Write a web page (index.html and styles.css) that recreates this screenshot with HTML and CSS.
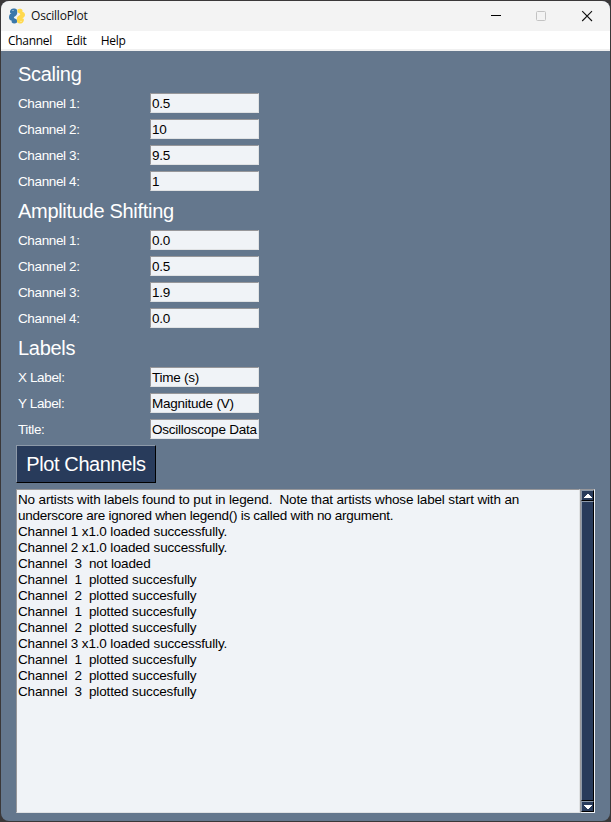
FILE: index.html
```html
<!DOCTYPE html>
<html lang="en">
<head>
<meta charset="utf-8">
<title>OscilloPlot</title>
<link rel="stylesheet" href="styles.css">
</head>
<body>
<div class="window">
  <header class="titlebar">
    <svg class="logo" width="16" height="16" viewBox="0 0 16 16">
      <path fill="#3b78aa" d="M2 1.500C3 .3 6.500 .2 7.600 1.200C8.500 2.500 8.500 5 7.800 6.500C7 8 5.300 8.300 4.800 9.800C5.300 10.800 7 10.500 8 12V14.500C6.500 15.700 4 15.700 2.800 14.500L2.500 12.500C.8 12.500 0 11 0 9.300C0 7.500 .8 6 2.500 5H1.300C.7 4 1 2.500 2 1.500Z"/>
      <path fill="#ffd94d" d="M8.500 1.500C9.700.5 12.500 .5 13.500 2V4C15.300 4 16 5.500 16 7C16 8.500 14.600 9.800 13.300 10.500L14.700 10.800C15.200 12.500 14.700 14 13.300 15C11.500 15.800 9.500 15.700 8.300 14.500C7.700 13 7.700 10.500 8.300 9C9.200 7.600 10.900 7.300 11.300 6.200C11 5 9.500 5.500 8.500 4Z"/>
      <circle cx="4" cy="2.500" r=".5" fill="#fff"/>
      <circle cx="12" cy="13.300" r=".5" fill="#fff"/>
    </svg>
    <span class="app-name">OscilloPlot</span>
    <svg class="controls" width="106" height="12" viewBox="0 0 106 12" fill="none">
      <path d="M0 5.500H10" stroke="#000"/>
      <rect x="45.500" y="1.500" width="9" height="9" rx="1" stroke="#c3c3c3"/>
      <path d="M91.200 1.200L101 11M101 1.200L91.200 11" stroke="#111" stroke-width="1.100"/>
    </svg>
  </header>
  <nav class="menubar"><span>Channel</span><span>Edit</span><span>Help</span></nav>
  <main class="content">
    <section>
      <h2>Scaling</h2>
      <div class="row"><span class="label">Channel 1:</span><div class="field">0.5</div></div>
      <div class="row"><span class="label">Channel 2:</span><div class="field">10</div></div>
      <div class="row"><span class="label">Channel 3:</span><div class="field">9.5</div></div>
      <div class="row"><span class="label">Channel 4:</span><div class="field">1</div></div>
    </section>
    <section>
      <h2>Amplitude Shifting</h2>
      <div class="row"><span class="label">Channel 1:</span><div class="field">0.0</div></div>
      <div class="row"><span class="label">Channel 2:</span><div class="field">0.5</div></div>
      <div class="row"><span class="label">Channel 3:</span><div class="field">1.9</div></div>
      <div class="row"><span class="label">Channel 4:</span><div class="field">0.0</div></div>
    </section>
    <section>
      <h2>Labels</h2>
      <div class="row"><span class="label">X Label:</span><div class="field">Time (s)</div></div>
      <div class="row"><span class="label">Y Label:</span><div class="field">Magnitude (V)</div></div>
      <div class="row"><span class="label">Title:</span><div class="field">Oscilloscope Data</div></div>
    </section>
    <button class="plot">Plot Channels</button>
    <div class="log">
      <div class="output"><p>No artists with labels found to put in legend.  Note that artists whose label start with an</p><p class="tight">underscore are ignored when legend() is called with no argument.</p><p>Channel 1 x1.0 loaded successfully.</p><p>Channel 2 x1.0 loaded successfully.</p><p>Channel  3  not loaded</p><p>Channel  1  plotted succesfully</p><p>Channel  2  plotted succesfully</p><p>Channel  1  plotted succesfully</p><p>Channel  2  plotted succesfully</p><p>Channel 3 x1.0 loaded successfully.</p><p>Channel  1  plotted succesfully</p><p>Channel  2  plotted succesfully</p><p>Channel  3  plotted succesfully</p></div>
      <div class="scrollbar">
        <div class="cap"><svg width="8" height="4" viewBox="0 0 8 4"><path fill="#fff" d="M3 0H5V1H6V2H7V3H8V4H0V3H1V2H2V1H3Z"/></svg></div>
        <div class="thumb"></div>
        <div class="cap"><svg width="8" height="4" viewBox="0 0 8 4"><path fill="#fff" d="M0 0H8V1H7V2H6V3H5V4H3V3H2V2H1V1H0Z"/></svg></div>
      </div>
    </div>
  </main>
</div>
</body>
</html>
```
FILE: styles.css
```css
* { box-sizing: border-box; }
body {
  margin: 0;
  height: 822px;
  padding: 1px;
  overflow: hidden;
  background: #3a3839;
  font: 13.5px/16px "Liberation Sans", Arial, sans-serif;
  letter-spacing: -0.15px;
}
.window {
  width: 609px;
  height: 820px;
  border-radius: 8px;
  overflow: hidden;
  background: #64778d;
}
.titlebar {
  display: flex;
  align-items: center;
  height: 30px;
  padding-left: 8px;
  background: #f3f3f3;
}
.app-name {
  margin-left: 6px;
  font: 12px/16px "Open Sans", sans-serif;
  letter-spacing: -0.2px;
  color: #111;
}
.controls { margin-left: auto; margin-right: 13px; }
.menubar {
  display: flex;
  gap: 14.3px;
  height: 20px;
  padding: 2px 7px 0;
  background: #fff;
  border-bottom: 2px solid #f0f0f0;
  font: 12px/16px "Open Sans", sans-serif;
  letter-spacing: -0.3px;
}
.content { padding: 9px 15px 0; }
h2 {
  margin: 0 0 6px;
  padding: 1px 0 0 2px;
  height: 27px;
  font-size: 20px;
  font-weight: normal;
  line-height: 27px;
  letter-spacing: -0.3px;
  color: #fff;
}
.row { display: flex; height: 20px; margin-bottom: 6px; }
.label {
  width: 134px;
  padding: 1px 0 0 2px;
  line-height: 20px;
  letter-spacing: -0.38px;
  color: #fff;
}
.field {
  width: 109px;
  height: 20px;
  padding: 1px 0 0 1px;
  overflow: hidden;
  white-space: nowrap;
  line-height: 18px;
  letter-spacing: -0.24px;
  color: #000;
  background: #f0f3f7;
  border: 1px solid;
  border-color: #97979a #e0e2e4 #e0e2e4 #97979a;
}
.plot {
  display: block;
  width: 140px;
  height: 38px;
  padding: 0;
  border: 1px solid;
  border-color: #8d99a8 #000 #000 #8d99a8;
  background: #283b5b;
  color: #fff;
  font: 20px/34px "Liberation Sans", Arial, sans-serif;
  letter-spacing: -0.4px;
  white-space: nowrap;
}
.log { display: flex; width: 579px; height: 324px; margin-top: 6px; }
.output {
  width: 564px;
  padding: 2px 1px;
  background: #f0f3f7;
  border: 1px solid;
  border-color: #97979a #e0e2e4 #e0e2e4 #97979a;
}
.output p { margin: 0; white-space: pre; }
.output .tight { letter-spacing: -0.27px; }
.scrollbar {
  display: flex;
  flex-direction: column;
  width: 15px;
  border: 1px solid;
  border-color: #97979a #f0f3f7 #f0f3f7 #97979a;
  background: #283b5b;
}
.cap, .thumb {
  border: 1px solid;
  border-color: #8d99a8 #000 #000 #8d99a8;
}
.cap { display: flex; align-items: center; justify-content: center; height: 11px; }
.thumb { flex: 1; }
```
